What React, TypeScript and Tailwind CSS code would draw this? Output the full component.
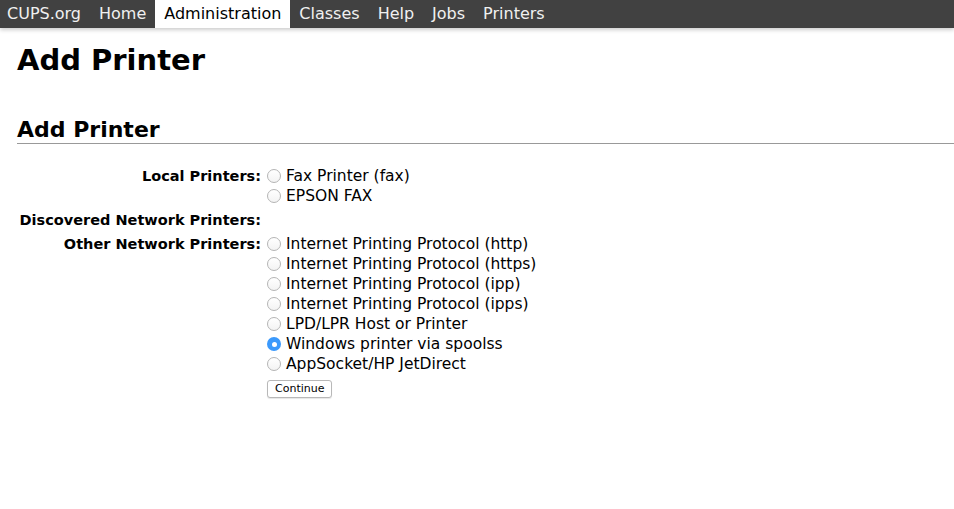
const NAV = ['CUPS.org', 'Home', 'Administration', 'Classes', 'Help', 'Jobs', 'Printers'];

const OTHER = [
  'Internet Printing Protocol (http)',
  'Internet Printing Protocol (https)',
  'Internet Printing Protocol (ipp)',
  'Internet Printing Protocol (ipps)',
  'LPD/LPR Host or Printer',
  'Windows printer via spoolss',
  'AppSocket/HP JetDirect',
];

const Radio = ({ checked }: { checked?: boolean }) =>
  checked ? (
    <span className="w-[14px] h-[14px] rounded-full bg-[#3b99fc] flex items-center justify-center shrink-0">
      <span className="w-[5px] h-[5px] rounded-full bg-white" />
    </span>
  ) : (
    <span className="w-[14px] h-[14px] rounded-full border border-[#b5b5b5] bg-gradient-to-b from-white to-[#f3f3f3] shrink-0" />
  );

const Option = ({ label, checked }: { label: string; checked?: boolean }) => (
  <div className="h-5 flex items-center gap-[5px] whitespace-nowrap">
    <Radio checked={checked} />
    <span>{label}</span>
  </div>
);

export default function App() {
  return (
    <div className="min-h-[509px] bg-white text-black font-['DejaVu_Sans',sans-serif]">
      <div className="h-[28px] bg-[#414141] flex items-stretch shadow-[0_2px_4px_rgba(0,0,0,0.2)] text-[16px]">
        {NAV.map((n, i) => (
          <div
            key={n}
            className={
              n === 'Administration'
                ? 'px-[9px] flex items-center bg-white text-black'
                : i === 0
                  ? 'pl-[7px] pr-[9px] flex items-center text-[#f0f0f0]'
                  : 'px-[9px] flex items-center text-[#f0f0f0]'
            }
          >
            {n}
          </div>
        ))}
      </div>

      <div className="px-[17px]">
        <h1 className="text-[29px] font-bold mt-[13px] leading-[38px]">Add Printer</h1>
        <h2 className="text-[22px] font-bold mt-[38px] leading-[26px] border-b border-[#999] mr-[-17px]">
          Add Printer
        </h2>

        <div className="mt-[22px] grid grid-cols-[244px_1fr] gap-x-[6px] text-[15.5px] leading-5">
          <div className="font-bold text-right text-[14.5px] h-5 whitespace-nowrap">Local Printers:</div>
          <div>
            <Option label="Fax Printer (fax)" />
            <Option label="EPSON FAX" />
          </div>
          <div className="font-bold text-right text-[14.5px] mt-[4px] h-5 whitespace-nowrap">Discovered Network Printers:</div>
          <div className="mt-[4px]" />
          <div className="font-bold text-right text-[14.5px] mt-[4px] h-5 whitespace-nowrap">Other Network Printers:</div>
          <div className="mt-[4px]">
            {OTHER.map((o) => (
              <Option key={o} label={o} checked={o === 'Windows printer via spoolss'} />
            ))}
            <button className="mt-[6px] h-[18px] px-[7px] border border-[#b8b8b8] rounded-[3px] bg-white text-[11px] leading-[16px] shadow-[0_1px_1px_rgba(0,0,0,0.1)]">
              Continue
            </button>
          </div>
        </div>
      </div>
    </div>
  );
}
